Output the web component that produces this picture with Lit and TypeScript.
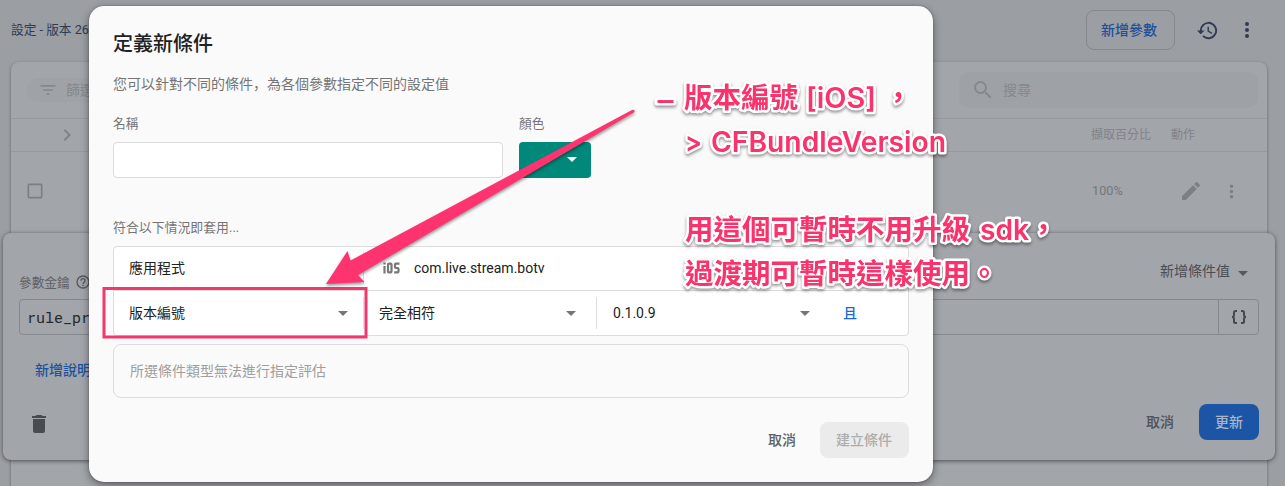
import { LitElement, html, css, svg } from "lit";
import { customElement } from "lit/decorators.js";

const icon = (d: string, size: number, cls = "") =>
  html`<svg class="icon ${cls}" width=${size} height=${size} viewBox="0 0 24 24"><path d=${d}></path></svg>`;

const P = {
  history:
    "M13 3a9 9 0 0 0-9 9H1l3.89 3.89.07.14L9 12H6a7 7 0 1 1 2.06 4.94l-1.42 1.42A9 9 0 1 0 13 3zm-1 5v5l4.28 2.54.72-1.21-3.5-2.08V8H12z",
  more: "M12 8a2 2 0 1 0 0-4 2 2 0 0 0 0 4zm0 2a2 2 0 1 0 0 4 2 2 0 0 0 0-4zm0 6a2 2 0 1 0 0 4 2 2 0 0 0 0-4z",
  filter: "M10 18h4v-2h-4v2zM3 6v2h18V6H3zm3 7h12v-2H6v2z",
  search:
    "M15.5 14h-.79l-.28-.27A6.47 6.47 0 0 0 16 9.5 6.5 6.5 0 1 0 9.5 16c1.61 0 3.09-.59 4.23-1.57l.27.28v.79l5 4.99L20.49 19l-4.99-5zm-6 0a4.5 4.5 0 1 1 0-9 4.5 4.5 0 0 1 0 9z",
  chevron: "M10 6 8.59 7.41 13.17 12l-4.58 4.59L10 18l6-6z",
  box: "M19 5v14H5V5h14m0-2H5a2 2 0 0 0-2 2v14a2 2 0 0 0 2 2h14a2 2 0 0 0 2-2V5a2 2 0 0 0-2-2z",
  edit: "M3 17.25V21h3.75L17.81 9.94l-3.75-3.75L3 17.25zM20.71 7.04a1 1 0 0 0 0-1.41l-2.34-2.34a1 1 0 0 0-1.41 0l-1.83 1.83 3.75 3.75 1.83-1.83z",
  help: "M11 18h2v-2h-2v2zm1-16a10 10 0 1 0 0 20 10 10 0 0 0 0-20zm0 18a8 8 0 1 1 0-16 8 8 0 0 1 0 16zm0-14a4 4 0 0 0-4 4h2a2 2 0 1 1 4 0c0 2-3 1.75-3 5h2c0-2.25 3-2.5 3-5a4 4 0 0 0-4-4z",
  trash: "M6 19a2 2 0 0 0 2 2h8a2 2 0 0 0 2-2V7H6v12zM19 4h-3.5l-1-1h-5l-1 1H5v2h14V4z",
  drop: "M7 10l5 5 5-5z",
};

const shared = css`
  * { box-sizing: border-box; }
  .icon { display: block; flex: none; fill: currentColor; }
  .grow { flex: 1; }
`;

@customElement("config-page")
class ConfigPage extends LitElement {
  static styles = [
    shared,
    css`
      :host {
        display: flex; flex-direction: column; height: 486px; overflow: hidden;
        background: #9b9ea3; color: #55585d; font-size: 14px; line-height: 20px;
      }
      .bar { display: flex; align-items: center; height: 62px; flex: none; padding: 0 26px 2px 11px; color: #2d3c54; }
      .crumb { font-size: 12.7px; }
      .add {
        display: flex; align-items: center; width: 89px; height: 40px; padding-left: 14px;
        border: 1px solid #85888d; border-radius: 8px; color: #1b4f9c; font-weight: 500;
      }
      .hist { margin: 0 16px 0 21px; }
      .table {
        flex: none; height: 440px; margin: 0 18px 0 11px; background: #a2a5aa; border-radius: 8px;
        box-shadow: 0 1px 3px rgba(40, 43, 48, 0.55);
      }
      .tools { display: flex; align-items: center; height: 57px; padding: 0 9px 0 16px; border-bottom: 1px solid #97999e; color: #85888d; }
      .pill { display: flex; align-items: center; gap: 8px; width: 300px; height: 24px; padding-left: 11px; border-radius: 12px; background: #9fa2a7; }
      .search { display: flex; align-items: center; gap: 8px; width: 299px; height: 36px; padding-left: 12px; border-radius: 10px; background: #9ea1a6; }
      .head { display: flex; align-items: center; height: 33px; padding: 0 72px 0 44px; border-bottom: 1px solid #97999e; color: #808388; font-size: 12px; }
      .sample { width: 80px; }
      .act { width: 24px; }
      .act, .sample { white-space: nowrap; }
      .row { display: flex; align-items: center; height: 81px; padding: 0 25px 3px 14px; color: #7c7f84; font-size: 12.7px; }
      .pct { width: 87px; color: #74777c; }
      .check { color: #7c7f84; }
      .dots { margin-left: 18px; }
      .editor {
        height: 227px; margin: 0 -8px; border-radius: 8px; background: #a2a5aa; padding: 28px 16px 0;
        box-shadow: 0 1px 4px rgba(35, 38, 43, 0.7);
      }
      .line { display: flex; align-items: flex-start; height: 38px; }
      .label { color: #5e6166; font-size: 12.7px; padding-top: 12px; }
      .help { margin: 13px 0 0 5px; }
      .addval { color: #4a4d52; }
      .dd { margin: 0 4px 0 1px; }
      .field { display: flex; height: 36px; border: 1px solid #85888d; border-radius: 4px; }
      .code { flex: 1; padding: 7px; font-family: "Roboto Mono", "DejaVu Sans Mono", monospace; color: #26282c; font-size: 15px; line-height: 20px; }
      .brace { width: 40px; display: flex; align-items: center; justify-content: center; border-left: 1px solid #85888d; color: #46494e; }
      .brace svg { fill: none; stroke: currentColor; stroke-width: 2; }
      .desc { height: 69px; padding: 25px 0 0 16px; color: #1d529f; font-weight: 500; }
      .foot { display: flex; align-items: center; height: 36px; padding-left: 8px; font-weight: 500; }
      .trash { color: #484b50; margin-top: 3px; }
      .cancel { margin-right: 25px; color: #505358; }
      .update { width: 60px; height: 36px; border-radius: 8px; background: #1c55a6; color: #a9b6cb; line-height: 36px; text-align: center; }
    `,
  ];
  render() {
    return html`
      <div class="bar">
        <span class="crumb">設定 - 版本 26</span><span class="grow"></span>
        <span class="add">新增參數</span>
        ${icon(P.history, 23, "hist")} ${icon(P.more, 24)}
      </div>
      <div class="table">
        <div class="tools">
          <span class="pill">${icon(P.filter, 20)}<span>篩選</span></span><span class="grow"></span>
          <span class="search">${icon(P.search, 24)}<span>搜尋</span></span>
        </div>
        <div class="head">
          ${icon(P.chevron, 24)}<span class="grow"></span><span class="sample">擷取百分比</span><span class="act">動作</span>
        </div>
        <div class="row">
          ${icon(P.box, 20, "check")}<span class="grow"></span><span class="pct">100%</span>
          ${icon(P.edit, 24)} ${icon(P.more, 21, "dots")}
        </div>
        <div class="editor">
          <div class="line">
            <span class="label">參數金鑰</span>${icon(P.help, 16, "help")}<span class="grow"></span>
            <span class="addval">新增條件值</span>${icon(P.drop, 24, "dd")}
          </div>
          <div class="field">
            <span class="code">rule_pr</span>
            <span class="brace"><svg width="18" height="16" viewBox="0 0 18 16">
              <path d="M7 2H5.5Q4 2 4 3.5V6Q4 8 2 8Q4 8 4 10V12.500Q4 14 5.500 14H7M11 2H12.500Q14 2 14 3.500V6Q14 8 16 8Q14 8 14 10V12.500Q14 14 12.500 14H11"></path></svg></span>
          </div>
          <div class="desc">新增說明</div>
          <div class="foot">
            ${icon(P.trash, 24, "trash")}<span class="grow"></span><span class="cancel">取消</span><span class="update">更新</span>
          </div>
        </div>
      </div>`;
  }
}

@customElement("condition-dialog")
class ConditionDialog extends LitElement {
  static styles = [
    shared,
    css`
      :host {
        display: block; box-sizing: border-box; width: 844px; height: 476px; padding: 25px 24px; border-radius: 15px;
        background: #fafafa; color: #212121; font-size: 14px; line-height: 20px;
        box-shadow: 0 3px 9px rgba(0, 0, 0, 0.42), 0 0 2px rgba(0, 0, 0, 0.3);
      }
      h2 { margin: 0; font-size: 20px; line-height: 26px; font-weight: 500; }
      .intro { margin: 16px 0 20px; color: #757575; }
      .comma { font-family: "Noto Sans CJK SC", sans-serif; }
      .fields { display: grid; grid-template-columns: 390px 72px; column-gap: 16px; color: #757575; font-size: 12.7px; }
      .input { height: 36px; margin-top: 8px; border: 1px solid #dcdcdc; border-radius: 4px; background: #fff; }
      .color { height: 36px; margin-top: 8px; border-radius: 4px; background: #00897b; color: #fff; padding: 5px 7px 0 41px; }
      .when { margin: 40px 0 8px; color: #757575; font-size: 12.9px; line-height: 20px; }
      .rules { height: 90px; border: 1px solid #dcdcdc; border-radius: 4px; background: #fff; }
      .rule { display: grid; align-items: center; grid-template-columns: 250px 233px 231px 1fr; height: 43px; }
      .rule.first { padding-bottom: 2px; }
      .rule + .rule { height: 45px; border-top: 1px solid #dcdcdc; }
      .cell { display: flex; align-items: center; height: 32px; padding: 0 8px 0 15px; border-right: 1px solid #dcdcdc; }
      .cell.op { padding-right: 13px; }
      .cell.val { border: 0; padding-right: 11px; padding-left: 16px; }
      .cell svg { color: #757575; }
      .app { display: flex; align-items: center; gap: 14px; padding-left: 19px; white-space: nowrap; }
      .ios { fill: none; stroke: #777; stroke-width: 2.2; }
      .and { color: #1967d2; font-weight: 500; padding-left: 15px; }
      .eval { height: 54px; margin-top: 8px; padding: 16px; border: 1px solid #dcdcdc; border-radius: 8px; color: #9e9e9e; }
      .actions { display: flex; justify-content: flex-end; align-items: center; gap: 24px; margin-top: 24px; font-weight: 500; color: #616161; }
      .create { width: 89px; height: 36px; line-height: 36px; padding-left: 16px; border-radius: 8px; background: #ebebeb; color: #adadad; }
    `,
  ];
  render() {
    return html`
      <h2>定義新條件</h2>
      <div class="intro" lang="zh-TW">您可以針對不同的條件<span class="comma" lang="zh-CN">，</span>為各個參數指定不同的設定值</div>
      <div class="fields">
        <div>名稱<div class="input"></div></div>
        <div>顏色<div class="color">${icon(P.drop, 24)}</div></div>
      </div>
      <div class="when">符合以下情況即套用...</div>
      <div class="rules">
        <div class="rule first">
          <span class="cell">應用程式</span>
          <span class="app">
            <svg class="ios" width="17" height="12" viewBox="0 0 17 12" role="img" aria-label="iOS">
              <path d="M1.500 4V11.500M1.500 .5V2.500M5.500 1.600H7.500Q8.500 1.600 8.500 2.600V9.400Q8.500 10.400 7.500 10.400H6Q5 10.400 5 9.400V2.600Q5 1.600 6 1.600M16.500 1.600H13Q12 1.600 12 2.600V5Q12 6 13 6H14.500Q15.500 6 15.500 7V9.400Q15.500 10.400 14.500 10.400H11.200"></path>
            </svg><span>com.live.stream.botv</span>
          </span>
        </div>
        <div class="rule">
          <span class="cell">版本編號<span class="grow"></span>${icon(P.drop, 24)}</span>
          <span class="cell op">完全相符<span class="grow"></span>${icon(P.drop, 24)}</span>
          <span class="cell val">0.1.0.9<span class="grow"></span>${icon(P.drop, 24)}</span>
          <span class="and">且</span>
        </div>
      </div>
      <div class="eval">所選條件類型無法進行指定評估</div>
      <div class="actions"><span>取消</span><span class="create">建立條件</span></div>`;
  }
}

const NOTES: { x: number; y: number; text: string; w: number; latin?: boolean }[] = [
  { x: 657.5, y: 109.5, text: "–", w: 16, latin: true },
  { x: 684, y: 108, text: "版本編號", w: 114 },
  { x: 806, y: 108, text: "[iOS]", w: 70, latin: true },
  { x: 884, y: 108, text: "，", w: 28.5 },
  { x: 685, y: 152, text: ">", w: 17, latin: true },
  { x: 711, y: 152, text: "CFBundleVersion", w: 235, latin: true },
  { x: 685, y: 240, text: "用這個可暫時不用升級", w: 285 },
  { x: 980, y: 240, text: "sdk", w: 49, latin: true },
  { x: 1029, y: 240, text: "，", w: 28.5 },
  { x: 685, y: 284, text: "過渡期可暫時這樣使用。", w: 313.5 },
];

@customElement("app-root")
class AppRoot extends LitElement {
  static styles = css`
    :host {
      display: block; position: relative; width: 1285px; height: 486px; overflow: hidden;
      font-family: Roboto, "Noto Sans CJK TC", sans-serif;
    }
    condition-dialog { position: absolute; left: 89px; top: 6px; }
    .marks { position: absolute; inset: 0; }
    .shape { filter: drop-shadow(0 2px 1.5px rgba(0, 0, 0, 0.4)); }
    .frame { fill: none; stroke: #f0386f; stroke-width: 3; }
    .arrow { fill: #ff3370; }
    .note {
      font-family: "Noto Sans CJK TC", sans-serif; font-size: 28.5px; font-weight: 700; fill: #f9346c;
      stroke: #fff; stroke-width: 5; stroke-linejoin: round; paint-order: stroke;
    }
    .latin { font-family: Inter, sans-serif; font-size: 28px; font-weight: 600; }
  `;
  render() {
    return html`
      <config-page></config-page>
      <condition-dialog></condition-dialog>
      <svg class="marks" width="1285" height="486" viewBox="0 0 1285 486">
        <rect class="frame" x="104" y="288.500" width="262" height="48.500"></rect>
        <path class="arrow shape" d="M326 284L347.500 251L350.500 260.500L632 110Q635 109 634.500 112L358 275L364.500 282Z"></path>
        <g class="shape">
          ${NOTES.map((n) => svg`<text class=${n.latin ? "note latin" : "note"} x=${n.x} y=${n.y} textLength=${n.w} lengthAdjust="spacingAndGlyphs">${n.text}</text>`)}
        </g>
      </svg>`;
  }
}
